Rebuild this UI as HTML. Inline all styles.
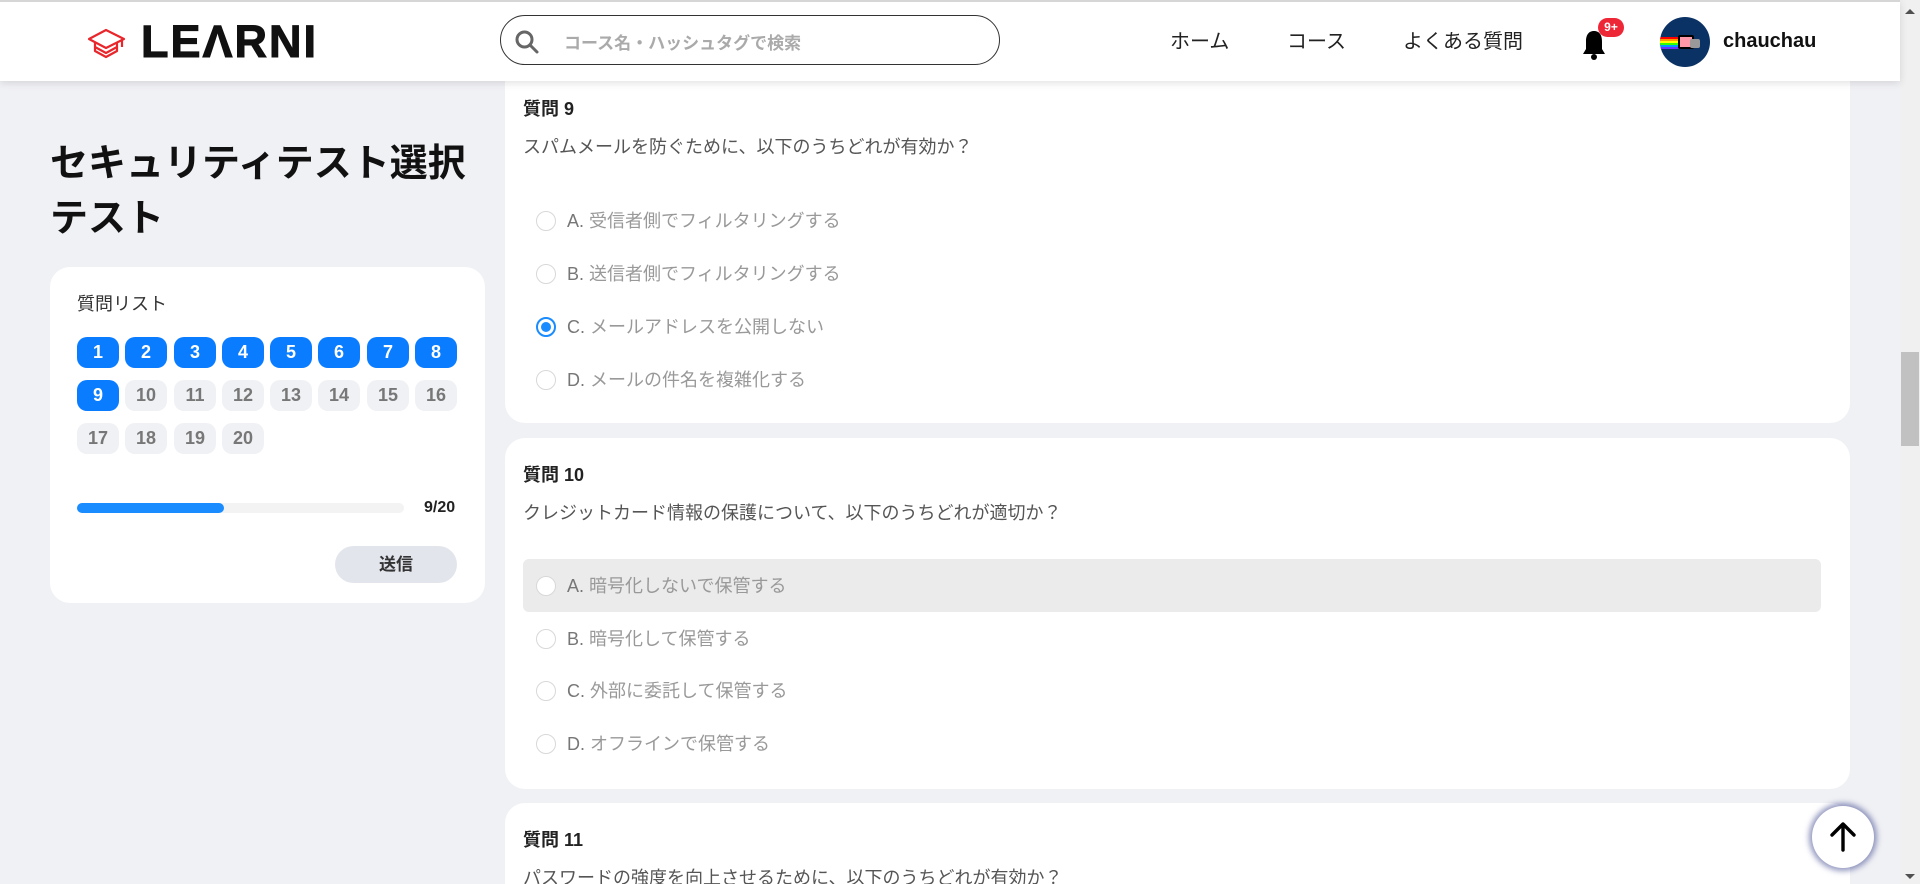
<!DOCTYPE html>
<html style="overflow:hidden;width:1920px;height:884px"><head><meta charset="utf-8">
<style>
*{margin:0;padding:0;box-sizing:border-box}
body{width:1920px;height:884px;overflow:hidden;background:#f0f1f5;font-family:"Liberation Sans","Noto Sans CJK JP",sans-serif;position:relative}
.hdr{position:absolute;left:0;top:0;width:1900px;height:81px;background:#fff;border-top:2px solid #d6d6d6;box-shadow:0 2px 8px rgba(0,0,0,.12);z-index:5}
.abs{position:absolute}
.nav{position:absolute;top:23px;font-size:20px;color:#222}
.card{position:absolute;background:#fff;border-radius:20px}
.qb{position:absolute;width:42px;height:31px;border-radius:10px;font-weight:bold;font-size:18px;text-align:center;line-height:31px}
.on{background:#0a7cff;color:#fff}
.off{background:#f0f1f4;color:#777}
.qt{position:absolute;left:18px;font-weight:bold;font-size:18px;color:#222}
.qq{position:absolute;left:18px;font-size:18px;color:#555}
.op{position:absolute;left:62px;font-size:18px;color:#999;line-height:24px}
.op b{font-weight:normal;color:#777}
.rd{position:absolute;left:31px;width:20px;height:20px;border:1px solid #d8d8d8;border-radius:50%;background:#fff}
.rd.sel{border:2px solid #1a8cff}
.rd.sel:after{content:"";position:absolute;left:3px;top:3px;width:10px;height:10px;border-radius:50%;background:#1a8cff}
</style></head><body>
<div class="hdr">
  <svg class="abs" style="left:86px;top:25px" width="42" height="34" viewBox="0 0 42 34" fill="none" stroke="#e8262b" stroke-width="2.2" stroke-linejoin="round">
    <path d="M3 12 L20 3 L38 12 L20 21 Z"/>
    <path d="M9 16 V24 L20 30 L31 24 V16"/>
    <path d="M9 20 L20 26 L31 20"/>
    <path d="M36 12 V20"/>
  </svg>
  <div class="abs" style="left:141px;top:14px;font-size:45px;font-weight:bold;letter-spacing:2px;color:#111;-webkit-text-stroke:1px #111">LEΛRNI</div>
  <div class="abs" style="left:500px;top:13px;width:500px;height:50px;border:1.5px solid #333;border-radius:25px">
    <svg class="abs" style="left:13px;top:13px" width="26" height="26" viewBox="0 0 26 26" fill="none" stroke="#666" stroke-width="3"><circle cx="10.5" cy="10.5" r="7.5"/><path d="M16 16 L23 23" stroke-linecap="round"/></svg>
    <div class="abs" style="left:63px;top:13px;font-size:17px;font-weight:bold;color:#aaa">コース名・ハッシュタグで検索</div>
  </div>
  <div class="nav" style="left:1170px">ホーム</div>
  <div class="nav" style="left:1287px">コース</div>
  <div class="nav" style="left:1403px">よくある質問</div>
  <svg class="abs" style="left:1582px;top:26px" width="24" height="34" viewBox="0 0 24 34"><path d="M12 3 C6 3 4 8 4 13 V21 L1 26 H23 L20 21 V13 C20 8 18 3 12 3Z" fill="#000"/><circle cx="12" cy="29" r="3" fill="#000"/></svg>
  <div class="abs" style="left:1598px;top:16px;width:26px;height:19px;border-radius:10px;background:#ee2737;color:#fff;font-size:12px;font-weight:bold;text-align:center;line-height:19px">9+</div>
  <div class="abs" style="left:1660px;top:15px;width:50px;height:50px;border-radius:50%;background:#0b3264;overflow:hidden">
    <div class="abs" style="left:0;top:20px;width:20px;height:12px;background:linear-gradient(#f00 0,#f00 17%,#f90 17%,#f90 33%,#ff0 33%,#ff0 50%,#3f0 50%,#3f0 67%,#09f 67%,#09f 83%,#63f 83%)"></div>
    <div class="abs" style="left:18px;top:18px;width:16px;height:14px;background:#f9a;border:2px solid #000;border-radius:2px"></div>
    <div class="abs" style="left:30px;top:22px;width:10px;height:9px;background:#999;border-radius:2px"></div>
  </div>
  <div class="abs" style="left:1723px;top:28px;font-size:20px;font-weight:bold;color:#111">chauchau</div>
</div>

<div class="abs" style="left:50px;top:137px;font-size:38px;font-weight:bold;color:#111;line-height:55px">セキュリティテスト選択<br>テスト</div>

<div class="card" style="left:50px;top:267px;width:435px;height:336px">
  <div class="abs" style="left:27px;top:23px;font-size:18px;color:#333">質問リスト</div>
  <div class="qb on" style="left:27px;top:70px">1</div>
  <div class="qb on" style="left:75px;top:70px">2</div>
  <div class="qb on" style="left:124px;top:70px">3</div>
  <div class="qb on" style="left:172px;top:70px">4</div>
  <div class="qb on" style="left:220px;top:70px">5</div>
  <div class="qb on" style="left:268px;top:70px">6</div>
  <div class="qb on" style="left:317px;top:70px">7</div>
  <div class="qb on" style="left:365px;top:70px">8</div>
  <div class="qb on" style="left:27px;top:113px">9</div>
  <div class="qb off" style="left:75px;top:113px">10</div>
  <div class="qb off" style="left:124px;top:113px">11</div>
  <div class="qb off" style="left:172px;top:113px">12</div>
  <div class="qb off" style="left:220px;top:113px">13</div>
  <div class="qb off" style="left:268px;top:113px">14</div>
  <div class="qb off" style="left:317px;top:113px">15</div>
  <div class="qb off" style="left:365px;top:113px">16</div>
  <div class="qb off" style="left:27px;top:156px">17</div>
  <div class="qb off" style="left:75px;top:156px">18</div>
  <div class="qb off" style="left:124px;top:156px">19</div>
  <div class="qb off" style="left:172px;top:156px">20</div>
  <div class="abs" style="left:27px;top:236px;width:327px;height:10px;border-radius:5px;background:#f3f3f4"><div style="width:147px;height:10px;border-radius:5px;background:#1a8cff"></div></div>
  <div class="abs" style="left:374px;top:232px;font-size:16px;font-weight:bold;color:#222">9/20</div>
  <div class="abs" style="left:285px;top:279px;width:122px;height:37px;border-radius:19px;background:#e2e5ec;text-align:center;line-height:37px;font-size:17px;font-weight:bold;color:#333">送信</div>
</div>

<div class="card" style="left:505px;top:40px;width:1345px;height:383px">
  <div class="qt" style="top:55px">質問 9</div>
  <div class="qq" style="top:93px">スパムメールを防ぐために、以下のうちどれが有効か？</div>
  <div class="rd" style="top:171px"></div><div class="op" style="top:169px"><b>A.</b> 受信者側でフィルタリングする</div>
  <div class="rd" style="top:224px"></div><div class="op" style="top:222px"><b>B.</b> 送信者側でフィルタリングする</div>
  <div class="rd sel" style="top:277px"></div><div class="op" style="top:275px"><b>C.</b> メールアドレスを公開しない</div>
  <div class="rd" style="top:330px"></div><div class="op" style="top:328px"><b>D.</b> メールの件名を複雑化する</div>
</div>

<div class="card" style="left:505px;top:438px;width:1345px;height:351px">
  <div class="qt" style="top:23px">質問 10</div>
  <div class="qq" style="top:61px">クレジットカード情報の保護について、以下のうちどれが適切か？</div>
  <div class="abs" style="left:18px;top:121px;width:1298px;height:53px;border-radius:6px;background:#ebebeb"></div>
  <div class="rd" style="top:138px"></div><div class="op" style="top:136px"><b>A.</b> 暗号化しないで保管する</div>
  <div class="rd" style="top:191px"></div><div class="op" style="top:189px"><b>B.</b> 暗号化して保管する</div>
  <div class="rd" style="top:243px"></div><div class="op" style="top:241px"><b>C.</b> 外部に委託して保管する</div>
  <div class="rd" style="top:296px"></div><div class="op" style="top:294px"><b>D.</b> オフラインで保管する</div>
</div>

<div class="card" style="left:505px;top:803px;width:1345px;height:81px;border-radius:20px 20px 0 0">
  <div class="qt" style="top:23px">質問 11</div>
  <div class="qq" style="top:61px">パスワードの強度を向上させるために、以下のうちどれが有効か？</div>
</div>

<div class="abs" style="left:1812px;top:806px;width:62px;height:62px;border-radius:50%;background:#fff;box-shadow:0 0 6px 3px rgba(60,70,140,.55)">
  <svg class="abs" style="left:17px;top:15px" width="28" height="32" viewBox="0 0 28 32" fill="none" stroke="#000" stroke-width="3.4" stroke-linecap="round" stroke-linejoin="round"><path d="M14 29 V4 M3 14 L14 3 L25 14"/></svg>
</div>

<div class="abs" style="left:1900px;top:0;width:20px;height:884px;background:#f0f0f0">
  <div class="abs" style="left:1px;top:352px;width:18px;height:94px;background:#c1c1c1"></div>
  <div class="abs" style="left:5px;top:9px;width:0;height:0;border-left:5px solid transparent;border-right:5px solid transparent;border-bottom:5px solid #505050"></div>
  <div class="abs" style="left:5px;top:874px;width:0;height:0;border-left:5px solid transparent;border-right:5px solid transparent;border-top:5px solid #505050"></div>
</div>
</body></html>
